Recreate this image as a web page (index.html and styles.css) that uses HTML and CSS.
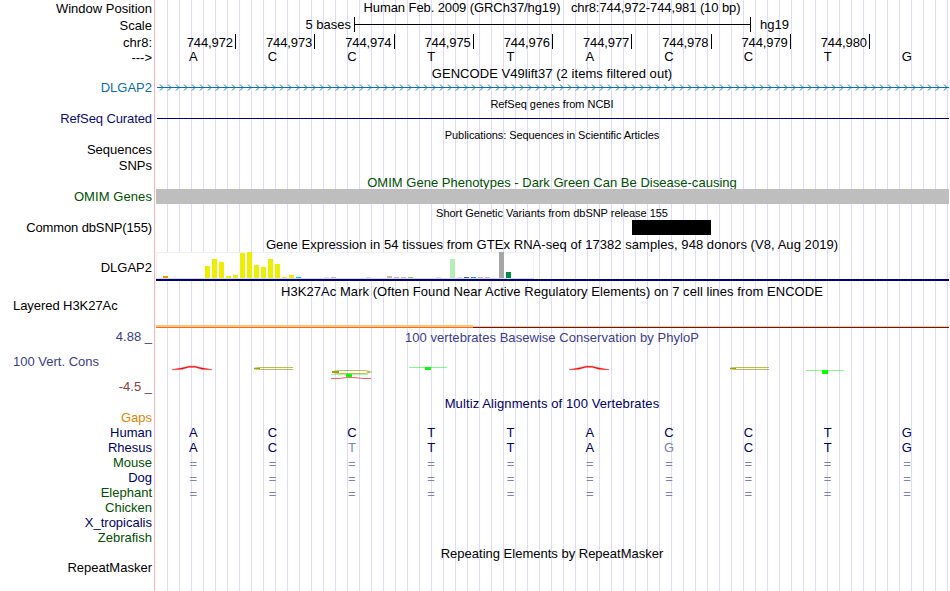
FILE: index.html
```html
<!DOCTYPE html>
<html lang="en">
<head>
<meta charset="utf-8">
<title>Genome Browser</title>
<link rel="stylesheet" href="styles.css">
</head>
<body>
<main class="browser">
  <section class="row window"><div class="label drop">Window Position</div><div class="title t-window">Human Feb. 2009 (GRCh37/hg19)&nbsp;&nbsp; chr8:744,972-744,981 (10 bp)</div></section>
  <section class="row scale"><div class="label drop">Scale</div><div class="scale-body"><span class="scale-size">5 bases</span><span class="scale-bar"></span><span>hg19</span></div></section>
  <section class="row ruler"><div class="label drop">chr8:</div><div class="ticks"><span>744,972</span><span>744,973</span><span>744,974</span><span>744,975</span><span>744,976</span><span>744,977</span><span>744,978</span><span>744,979</span><span>744,980</span></div></section>
  <section class="row bases-row"><div class="label drop">---&gt;</div><div class="bases"><span>A</span><span>C</span><span>C</span><span>T</span><span>T</span><span>A</span><span>C</span><span>C</span><span>T</span><span>G</span></div></section>

  <h2 class="title h14 t-gencode">GENCODE V49lift37 (2 items filtered out)</h2>
  <section class="row h16"><div class="label blue">DLGAP2</div>
    <svg class="plot" width="794" height="16"><defs><pattern id="chev" x="4" width="8" height="16" patternUnits="userSpaceOnUse"><path d="M1 4.5L4 7.5L1 10.5" class="chevron"/></pattern></defs><rect x="2" width="792" height="16" fill="url(#chev)"/><rect x="2" y="7" width="792" height="1" class="gene-line"/></svg></section>
  <h2 class="title small h15 drop t-refseq">RefSeq genes from NCBI</h2>
  <section class="row h16"><div class="label navy2 l-refseq">RefSeq Curated</div><div class="refseq-line"></div></section>
  <h2 class="title small h15 drop t-pubs">Publications: Sequences in Scientific Articles</h2>
  <section class="row h16"><div class="label">Sequences</div></section>
  <section class="row h16"><div class="label">SNPs</div></section>
  <h2 class="title h15 drop green t-omim">OMIM Gene Phenotypes - Dark Green Can Be Disease-causing</h2>
  <section class="row h15"><div class="label green l-omim">OMIM Genes</div><div class="omim-bar"></div></section>
  <h2 class="title small h16 drop2 t-snp">Short Genetic Variants from dbSNP release 155</h2>
  <section class="row h15"><div class="label l-common">Common dbSNP(155)</div><div class="snp-bar"></div></section>
  <h2 class="title h17 drop2 t-gtex">Gene Expression in 54 tissues from GTEx RNA-seq of 17382 samples, 948 donors (V8, Aug 2019)</h2>
  <section class="row gtex"><div class="label">DLGAP2</div>
    <svg class="plot" width="794" height="29" shape-rendering="crispEdges">
      <rect x="1" y="0" width="378" height="27" fill="#f0f0f0"/><rect x="2" y="1" width="376" height="25" fill="#fff"/>
      <rect x="1" y="26" width="378" height="1" fill="#d8d8d8"/>
      <rect x="8" y="24" width="5" height="2" fill="#ee9a00"/>
      <g fill="#eeee00"><rect x="50" y="14" width="5" height="12"/><rect x="57" y="7" width="5" height="19"/><rect x="64" y="10" width="5" height="16"/><rect x="71" y="24" width="5" height="2"/><rect x="78" y="23" width="5" height="3"/><rect x="85" y="1" width="5" height="25"/><rect x="92" y="0" width="5" height="26"/><rect x="99" y="13" width="5" height="13"/><rect x="106" y="15" width="5" height="11"/><rect x="113" y="7" width="5" height="19"/><rect x="120" y="12" width="5" height="14"/><rect x="127" y="25" width="5" height="1"/><rect x="134" y="23" width="5" height="3"/></g>
      <rect x="141" y="25" width="5" height="1" fill="#00cdcd"/>
      <g fill="#eed5d2"><rect x="169" y="25" width="5" height="1"/><rect x="211" y="25" width="5" height="1"/><rect x="281" y="25" width="5" height="1"/><rect x="302" y="25" width="5" height="1"/></g>
      <g fill="#cdb79e"><rect x="176" y="25" width="5" height="1"/><rect x="232" y="24" width="5" height="2"/><rect x="239" y="25" width="5" height="1"/><rect x="246" y="25" width="5" height="1"/><rect x="323" y="25" width="5" height="1"/><rect x="330" y="25" width="5" height="1"/></g>
      <rect x="253" y="25" width="5" height="1" fill="#9acd32"/><rect x="295" y="7" width="5" height="19" fill="#b4eeb4"/>
      <rect x="309" y="25" width="5" height="1" fill="#3a5fcd"/><rect x="316" y="25" width="5" height="1" fill="#1e90ff"/>
      <rect x="344" y="0" width="5" height="26" fill="#a6a6a6"/><rect x="351" y="20" width="5" height="6" fill="#008b45"/>
      <rect x="1" y="27" width="793" height="2" fill="#000078"/>
    </svg></section>
  <h2 class="title h17 drop3 t-h3k">H3K27Ac Mark (Often Found Near Active Regulatory Elements) on 7 cell lines from ENCODE</h2>
  <section class="row layered"><div class="label left l-layered">Layered H3K27Ac</div>
    <svg class="plot" width="794" height="31" shape-rendering="crispEdges"><rect x="1" y="27" width="317" height="2" fill="#ffc86e"/><rect x="1" y="29" width="317" height="1" fill="#ff6432"/><rect x="318" y="28" width="476" height="1" fill="#ffc86e"/><rect x="318" y="29" width="476" height="1" fill="#64143c"/></svg></section>
  <section class="row phylo"><div class="phylo-labels"><div class="label slate">4.88 _</div><div class="label left slate">100 Vert. Cons</div><div class="label maroon">-4.5 _</div></div>
    <div class="phylo-body"><h2 class="title h16 drop slate t-phylo">100 vertebrates Basewise Conservation by PhyloP</h2>
    <svg class="plot" width="794" height="50">
      <g class="peak"><path d="M17 24.7L29 22.5L34 21.2H40L45 22.5L57 24.7L47 24.2L40 22.3H34L27 24.2Z"/><path d="M414 24.7L426 22.5L431 21.2H437L442 22.5L454 24.7L444 24.2L437 22.3H431L424 24.2Z"/></g>
      <g class="olive"><path d="M138 22.5H106Q99 22.8 99 23.5Q99 24.2 106 24.5H138"/><path class="tip" d="M99 23.5H105"/><path d="M614 22.5H582Q575 22.8 575 23.5Q575 24.2 582 24.5H614"/><path class="tip" d="M575 23.5H581"/><path d="M215 26.4Q212 25.5 205 25.5H188Q178 25.7 178 27Q178 28.4 188 28.5H205Q212 28.5 215 27.6"/><path class="thick" d="M177 27H184"/><path d="M212 27H217"/></g>
      <g class="lime"><rect x="254" y="22" width="38" height="1" opacity=".5"/><rect x="270" y="22" width="6" height="3"/><rect x="176" y="29" width="37" height="1" opacity=".4"/><rect x="191" y="29" width="6" height="3"/><rect x="651" y="25" width="38" height="1" opacity=".5"/><rect x="667" y="25" width="6" height="4"/></g>
      <path class="low" d="M176 33.5H184Q190 32.5 196 32.5Q202 32.5 208 33.5H216"/>
    </svg></div></section>
  <h2 class="title h15 drop navy t-multiz">Multiz Alignments of 100 Vertebrates</h2>
  <section class="row h15"><div class="label orange">Gaps</div></section>
  <section class="row h15"><div class="label navy">Human</div><div class="bases navy"><span>A</span><span>C</span><span>C</span><span>T</span><span>T</span><span>A</span><span>C</span><span>C</span><span>T</span><span>G</span></div></section>
  <section class="row h15"><div class="label navy">Rhesus</div><div class="bases navy"><span>A</span><span>C</span><span class="dim">T</span><span>T</span><span>T</span><span>A</span><span class="dim">G</span><span>C</span><span>T</span><span>G</span></div></section>
  <section class="row h15"><div class="label green">Mouse</div><div class="bases gap"><span>=</span><span>=</span><span>=</span><span>=</span><span>=</span><span>=</span><span>=</span><span>=</span><span>=</span><span>=</span></div></section>
  <section class="row h15"><div class="label navy">Dog</div><div class="bases gap"><span>=</span><span>=</span><span>=</span><span>=</span><span>=</span><span>=</span><span>=</span><span>=</span><span>=</span><span>=</span></div></section>
  <section class="row h15"><div class="label green">Elephant</div><div class="bases gap"><span>=</span><span>=</span><span>=</span><span>=</span><span>=</span><span>=</span><span>=</span><span>=</span><span>=</span><span>=</span></div></section>
  <section class="row h15"><div class="label green">Chicken</div></section>
  <section class="row h15"><div class="label navy">X_tropicalis</div></section>
  <section class="row h15"><div class="label green">Zebrafish</div></section>
  <h2 class="title h15 drop t-repeat">Repeating Elements by RepeatMasker</h2>
  <section class="row h16"><div class="label">RepeatMasker</div></section>
</main>
</body>
</html>
```
FILE: styles.css
```css
* { box-sizing: border-box; }
body { margin: 0; background: #fff; overflow: hidden; }
.browser {
  width: 949px; height: 591px; color: #000;
  font: 13px/15px "Liberation Sans", Arial, sans-serif;
  background:
    linear-gradient(#ffb4b4, #ffb4b4) 154px 0 / 1px 100% no-repeat,
    repeating-linear-gradient(90deg, #dcdcff 0 1px, transparent 1px 12px) 167px 0 / 782px 100% no-repeat;
}
.row { display: flex; align-items: flex-start; }
.label { width: 152px; flex: none; text-align: right; white-space: nowrap; }
.row > .label { margin-right: 3px; }
.label.left { text-align: left; padding-left: 13px; }
.title { margin: 0; padding-left: 155px; font-size: 13px; font-weight: normal; text-align: center; white-space: nowrap; }
.row .title { padding-left: 0; width: 794px; }
.title.small { font-size: 11px; }
.h14 { height: 14px; } .h15 { height: 15px; } .h16 { height: 16px; } .h17 { height: 17px; }
.drop { padding-top: 1px; } .drop2 { padding-top: 2px; } .drop3 { padding-top: 3px; }
.plot { display: block; flex: none; }

.t-window { letter-spacing: -.09px; }
.t-gencode { letter-spacing: .05px; }
.t-refseq { letter-spacing: -.04px; }
.t-pubs { letter-spacing: -.07px; }
.t-omim { letter-spacing: .02px; }
.t-snp { letter-spacing: -.03px; }
.t-gtex { letter-spacing: .055px; }
.t-h3k { letter-spacing: .05px; }
.t-phylo { letter-spacing: .04px; }
.t-multiz { letter-spacing: .1px; }
.l-common { letter-spacing: -.12px; }
.l-refseq { letter-spacing: -.1px; }
.l-omim { letter-spacing: .08px; }
.l-layered { letter-spacing: -.06px; }

.window, .scale { height: 17px; }
.scale-body { display: flex; }
.scale-size { width: 196px; text-align: right; }
.scale-bar { width: 397px; height: 15px; margin: 0 9px 0 3px; border: solid #000; border-width: 0 1px; background: linear-gradient(#000, #000) 0 7px / 100% 1px no-repeat; }
.ruler { height: 15px; }
.ticks { display: grid; grid-template-columns: repeat(9, 79.25px); margin-left: 1.75px; letter-spacing: -.1px; }
.ticks span { height: 15px; line-height: 17px; padding-right: 2px; border-right: 1px solid #000; text-align: right; }
.bases-row { height: 17px; }
.bases { display: grid; grid-template-columns: repeat(10, 79.3px); margin-left: -1.4px; text-align: center; }

.refseq-line { width: 792px; height: 1px; margin: 7px 0 0 2px; background: #000078; }
.omim-bar { width: 793px; height: 15px; margin-left: 1px; background: #bebebe; }
.snp-bar { width: 79px; height: 15px; margin-left: 477px; background: #000; }
.gtex { height: 29px; } .gtex .label { padding-top: 8px; }
.layered { height: 31px; }
.phylo { height: 66px; }
.phylo-labels { display: flex; flex-direction: column; gap: 10px; margin-right: 3px; }

.chevron { fill: none; stroke: #0c6eaa; stroke-width: 1; }
.gene-line { fill: #0c6eaa; }
.peak { fill: #f00; stroke: #f00; stroke-width: .4; }
.olive { fill: none; stroke: #a0a000; stroke-width: .7; }
.olive .tip { stroke-width: 1; }
.olive .thick { stroke-width: 2; }
.lime { fill: #0f0; }
.low { fill: none; stroke: #f33; stroke-width: .8; }

.blue { color: #0c6eaa; }
.navy { color: #000064; }
.navy2 { color: #0c0c78; }
.green { color: #005000; }
.slate { color: #3c3c8c; }
.maroon { color: #8c3c3c; }
.orange { color: #e68200; }
.dim, .gap { color: #8080b4; }
.gap { padding-top: 1px; }
```
